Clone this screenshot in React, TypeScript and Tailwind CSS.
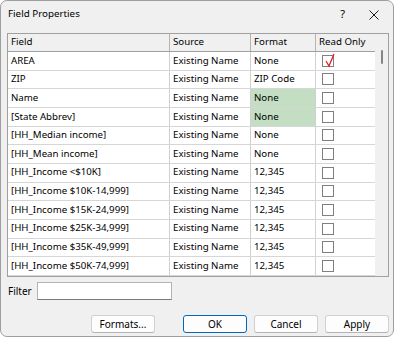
import React from "react";

type Row = {
  field: string;
  format: string;
  highlight?: boolean;
  readOnly?: boolean;
};

const rows: Row[] = [
  { field: "AREA", format: "None", readOnly: true },
  { field: "ZIP", format: "ZIP Code" },
  { field: "Name", format: "None", highlight: true },
  { field: "[State Abbrev]", format: "None", highlight: true },
  { field: "[HH_Median income]", format: "None" },
  { field: "[HH_Mean income]", format: "None" },
  { field: "[HH_Income <$10K]", format: "12,345" },
  { field: "[HH_Income $10K-14,999]", format: "12,345" },
  { field: "[HH_Income $15K-24,999]", format: "12,345" },
  { field: "[HH_Income $25K-34,999]", format: "12,345" },
  { field: "[HH_Income $35K-49,999]", format: "12,345" },
  { field: "[HH_Income $50K-74,999]", format: "12,345" },
];

function CheckBox({ checked }: { checked?: boolean }) {
  return (
    <div className="relative w-[12px] h-[12px] border border-[#7f7f7f] bg-white">
      {checked && (
        <svg width="14" height="16" viewBox="0 0 14 16" className="absolute left-[1px] top-[-4px]">
          <path d="M2 9 L5 14 L10 2" stroke="#e0202a" strokeWidth="1.3" fill="none" />
        </svg>
      )}
    </div>
  );
}

function Button({ label, primary }: { label: string; primary?: boolean }) {
  return (
    <button
      className={`w-[64px] h-[18px] rounded-[3px] bg-[#fdfdfd] text-[10px] leading-none text-black border ${
        primary ? "border-[#0067c0]" : "border-[#d0d0d0] border-b-[#b4b4b4]"
      }`}
    >
      {label}
    </button>
  );
}

export default function App() {
  return (
    <div
      className="w-[394px] h-[337px] bg-white"
      style={{ fontFamily: '"Noto Sans", sans-serif' }}
    >
      <div className="w-full h-full rounded-[7px] border border-[#9e9e9e] bg-[#f0f0f0] flex flex-col overflow-hidden">
        {/* title bar */}
        <div className="h-[27px] flex items-center pl-[7px] pr-[14px] text-[9.8px] text-black">
          <span>Field Properties</span>
          <span className="ml-auto mr-[24px] text-[11px]">?</span>
          <svg width="10" height="10" viewBox="0 0 10 10">
            <path d="M0.5 0.5 L9.5 9.5 M9.5 0.5 L0.5 9.5" stroke="#1a1a1a" strokeWidth="1" />
          </svg>
        </div>

        {/* grid */}
        <div className="mt-[5px] ml-[6px] w-[382px] h-[244px] border border-[#a0a0a0] bg-white flex text-[9.7px] text-black">
          <div className="w-[367px] flex flex-col">
            <div className="h-[18px] flex bg-[#f0f0f0] border-b border-[#a0a0a0]">
              <div className="w-[162px] pl-[3px] border-r border-[#b4b4b4] flex items-center">Field</div>
              <div className="w-[81px] pl-[3px] border-r border-[#b4b4b4] flex items-center">Source</div>
              <div className="w-[65px] pl-[3px] border-r border-[#b4b4b4] flex items-center">Format</div>
              <div className="w-[59px] pl-[3px] flex items-center">Read Only</div>
            </div>
            {rows.map((r) => (
              <div key={r.field} className="h-[18.67px] flex border-b border-[#d6d6d6]">
                <div className="w-[162px] pl-[3px] border-r border-[#d0d0d0] flex items-center">{r.field}</div>
                <div className="w-[81px] pl-[3px] border-r border-[#d0d0d0] flex items-center">Existing Name</div>
                <div
                  className={`w-[65px] pl-[3px] border-r border-[#d0d0d0] flex items-center ${
                    r.highlight ? "bg-[#c4dec4]" : ""
                  }`}
                >
                  {r.format}
                </div>
                <div className="w-[59px] pl-[6px] flex items-center">
                  <CheckBox checked={r.readOnly} />
                </div>
              </div>
            ))}
          </div>
          {/* scrollbar */}
          <div className="flex-1 bg-[#f0f0f0] pt-[16px] pl-[6px]">
            <div className="w-[2px] h-[14px] rounded-full bg-[#858585]" />
          </div>
        </div>

        {/* filter */}
        <div className="mt-[5px] ml-[7px] flex items-center text-[10px] text-black">
          <span>Filter</span>
          <div className="ml-[5px] w-[135px] h-[18px] bg-white border border-[#b4b4b4] border-b-[#7a7a7a]" />
        </div>

        {/* buttons */}
        <div className="mt-[15px] flex pl-[90px] gap-[7px]">
          <Button label="Formats..." />
          <div className="ml-[21px] flex gap-[7px]">
            <Button label="OK" primary />
            <Button label="Cancel" />
            <Button label="Apply" />
          </div>
        </div>
      </div>
    </div>
  );
}
